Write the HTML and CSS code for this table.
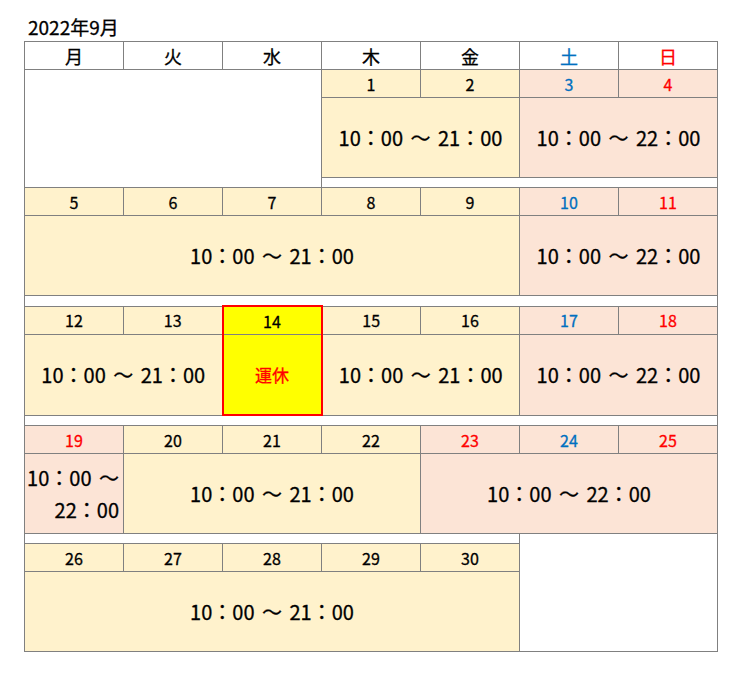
FILE: index.html
```html
<!DOCTYPE html>
<html lang="ja">
<head>
<meta charset="utf-8">
<title>2022年9月</title>
<link rel="stylesheet" href="styles.css">
</head>
<body>
<div class="wrap">
  <div class="title">2022年9月</div>
  <table class="cal">
    <colgroup>
      <col class="c"><col class="c"><col class="c"><col class="c"><col class="c"><col class="c"><col class="c">
    </colgroup>
    <tr class="hd">
      <td>月</td><td>火</td><td>水</td><td>木</td><td>金</td><td class="sat">土</td><td class="sun">日</td>
    </tr>

    <tr class="dt">
      <td class="blank" colspan="3" rowspan="3"></td>
      <td class="wk">1</td><td class="wk">2</td><td class="we sat">3</td><td class="we sun">4</td>
    </tr>
    <tr class="tm">
      <td class="wk" colspan="2">10：00 ～ 21：00</td>
      <td class="we" colspan="2">10：00 ～ 22：00</td>
    </tr>
    <tr class="sp"><td colspan="4"></td></tr>

    <tr class="dt">
      <td class="wk">5</td><td class="wk">6</td><td class="wk">7</td><td class="wk">8</td><td class="wk">9</td><td class="we sat">10</td><td class="we sun">11</td>
    </tr>
    <tr class="tm">
      <td class="wk" colspan="5">10：00 ～ 21：00</td>
      <td class="we" colspan="2">10：00 ～ 22：00</td>
    </tr>
    <tr class="sp"><td colspan="7"></td></tr>

    <tr class="dt">
      <td class="wk">12</td><td class="wk">13</td><td class="closed-top">14</td><td class="wk">15</td><td class="wk">16</td><td class="we sat">17</td><td class="we sun">18</td>
    </tr>
    <tr class="tm">
      <td class="wk" colspan="2">10：00 ～ 21：00</td>
      <td class="closed-bottom">運休</td>
      <td class="wk" colspan="2">10：00 ～ 21：00</td>
      <td class="we" colspan="2">10：00 ～ 22：00</td>
    </tr>
    <tr class="sp"><td colspan="7"></td></tr>

    <tr class="dt">
      <td class="we sun">19</td><td class="wk">20</td><td class="wk">21</td><td class="wk">22</td><td class="we sun">23</td><td class="we sat">24</td><td class="we sun">25</td>
    </tr>
    <tr class="tm">
      <td class="we narrow">10：00 ～ 22：00</td>
      <td class="wk" colspan="3">10：00 ～ 21：00</td>
      <td class="we" colspan="3">10：00 ～ 22：00</td>
    </tr>
    <tr class="sp">
      <td colspan="5"></td>
      <td class="blank" colspan="2" rowspan="3"></td>
    </tr>

    <tr class="dt">
      <td class="wk">26</td><td class="wk">27</td><td class="wk">28</td><td class="wk">29</td><td class="wk">30</td>
    </tr>
    <tr class="tm">
      <td class="wk" colspan="5">10：00 ～ 21：00</td>
    </tr>
  </table>
</div>
</body>
</html>
```

FILE: styles.css
```css
html, body {
  margin: 0;
  padding: 0;
  background: #ffffff;
}

body {
  font-family: "Noto Sans CJK JP", "Noto Sans", sans-serif;
  color: #000000;
  -webkit-text-stroke: 0.3px currentColor;
}

.wrap {
  padding: 12px 0 0 24px;
}

.title {
  font-size: 19px;
  line-height: 29px;
  padding-left: 4px;
}

.cal {
  border-collapse: collapse;
  table-layout: fixed;
  width: 694px;
}

.cal col.c {
  width: 99px;
}

.cal td {
  border: 1px solid #808080;
  padding: 0;
  text-align: center;
  vertical-align: middle;
}

.hd td {
  height: 27px;
  font-size: 18px;
  line-height: 20px;
}

.dt td {
  height: 27px;
  font-size: 16px;
  line-height: 20px;
}

.tm td {
  height: 79px;
  font-size: 20px;
  line-height: 32px;
  word-spacing: 3px;
}

.sp td {
  height: 9px;
  background: #ffffff;
}

.blank {
  background: #ffffff;
}

.wk {
  background: #fff2cc;
}

.we {
  background: #fce4d6;
}

.sat {
  color: #0070c0;
}

.sun {
  color: #ff0000;
}

.cal td.closed-top {
  background: #ffff00;
  border-top: 2px solid #ff0000;
  border-left: 2px solid #ff0000;
  border-right: 2px solid #ff0000;
}

.cal td.closed-bottom {
  background: #ffff00;
  color: #ff0000;
  font-size: 17px;
  word-spacing: 0;
  border-bottom: 2px solid #ff0000;
  border-left: 2px solid #ff0000;
  border-right: 2px solid #ff0000;
}

.cal td.narrow {
  text-align: right;
  padding-right: 4px;
}
```
